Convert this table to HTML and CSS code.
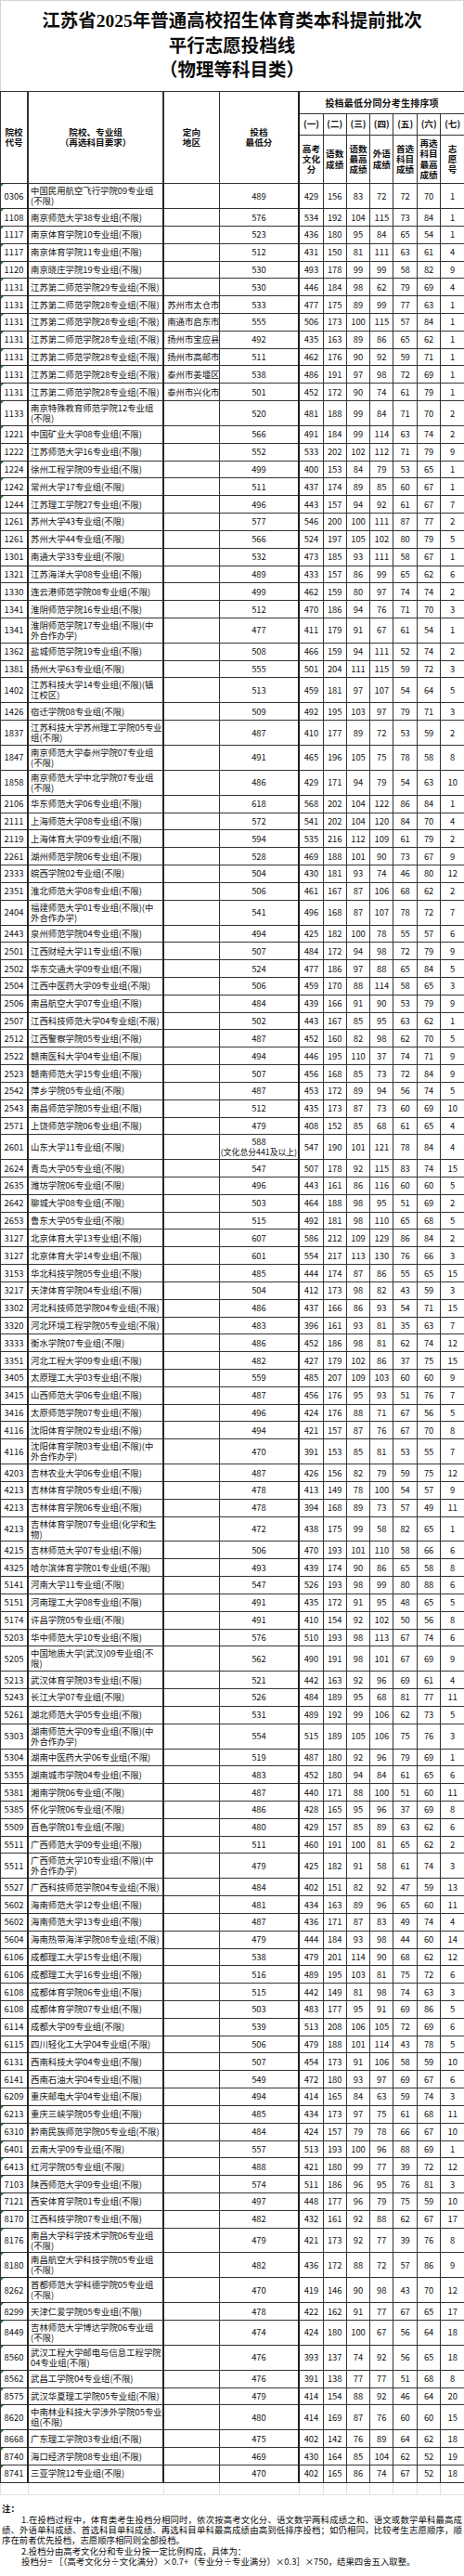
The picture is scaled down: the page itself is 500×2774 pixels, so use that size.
FILE: index.html
```html
<!DOCTYPE html>
<html lang="zh-CN">
<head>
<meta charset="utf-8">
<title>江苏省2025年普通高校招生体育类本科提前批次平行志愿投档线（物理等科目类）</title>
<link rel="stylesheet" href="styles.css">
</head>
<body>
<div class="sheet">
  <div class="title">
    <div>江苏省2025年普通高校招生体育类本科提前批次</div>
    <div>平行志愿投档线</div>
    <div>（物理等科目类）</div>
  </div>
  <table class="grid">
    <colgroup>
      <col class="w1"><col class="w2"><col class="w3"><col class="w4">
      <col class="w5"><col class="w6"><col class="w7"><col class="w8"><col class="w9"><col class="w10"><col class="w11">
    </colgroup>
    <thead>
      <tr class="ha">
        <th rowspan="3" class="bl">院校<br>代号</th>
        <th rowspan="3" class="bl2">院校、专业组<br>（再选科目要求）</th>
        <th rowspan="3">定向<br>地区</th>
        <th rowspan="3">投档<br>最低分</th>
        <th colspan="7" class="tk">投档最低分同分考生排序项</th>
      </tr>
      <tr class="hb">
        <th class="tk">(一)</th><th>(二)</th><th>(三)</th><th>(四)</th><th>(五)</th><th>(六)</th><th>(七)</th>
      </tr>
      <tr class="hc">
        <th class="tk">高考<br>文化<br>分</th><th>语数<br>成绩</th><th>语数<br>最高<br>成绩</th><th>外语<br>成绩</th><th>首选<br>科目<br>成绩</th><th>再选<br>科目<br>最高<br>成绩</th><th>志<br>愿<br>号</th>
      </tr>
    </thead>
    <tbody class="data">
      <tr class="t"><td class="g">0306</td><td>中国民用航空飞行学院09专业组<br>(不限)</td><td></td><td>489</td><td>429</td><td>156</td><td>83</td><td>72</td><td>72</td><td>70</td><td>1</td></tr>
      <tr><td class="g">1108</td><td>南京师范大学38专业组(不限)</td><td></td><td>576</td><td>534</td><td>192</td><td>104</td><td>115</td><td>73</td><td>84</td><td>1</td></tr>
      <tr><td class="g">1117</td><td>南京体育学院10专业组(不限)</td><td></td><td>523</td><td>436</td><td>180</td><td>95</td><td>84</td><td>65</td><td>54</td><td>1</td></tr>
      <tr><td class="g">1117</td><td>南京体育学院11专业组(不限)</td><td></td><td>512</td><td>431</td><td>150</td><td>81</td><td>111</td><td>63</td><td>61</td><td>4</td></tr>
      <tr><td class="g">1120</td><td>南京晓庄学院19专业组(不限)</td><td></td><td>530</td><td>493</td><td>178</td><td>99</td><td>99</td><td>58</td><td>82</td><td>9</td></tr>
      <tr><td class="g">1131</td><td>江苏第二师范学院29专业组(不限)</td><td></td><td>530</td><td>446</td><td>184</td><td>98</td><td>62</td><td>79</td><td>69</td><td>4</td></tr>
      <tr><td class="g">1131</td><td>江苏第二师范学院28专业组(不限)</td><td>苏州市太仓市</td><td>533</td><td>477</td><td>175</td><td>89</td><td>99</td><td>77</td><td>63</td><td>1</td></tr>
      <tr><td class="g">1131</td><td>江苏第二师范学院28专业组(不限)</td><td>南通市启东市</td><td>555</td><td>506</td><td>173</td><td>100</td><td>115</td><td>57</td><td>84</td><td>1</td></tr>
      <tr><td class="g">1131</td><td>江苏第二师范学院28专业组(不限)</td><td>扬州市宝应县</td><td>492</td><td>435</td><td>163</td><td>89</td><td>86</td><td>65</td><td>62</td><td>1</td></tr>
      <tr><td class="g">1131</td><td>江苏第二师范学院28专业组(不限)</td><td>扬州市高邮市</td><td>511</td><td>462</td><td>176</td><td>90</td><td>92</td><td>59</td><td>71</td><td>1</td></tr>
      <tr><td class="g">1131</td><td>江苏第二师范学院28专业组(不限)</td><td>泰州市姜堰区</td><td>538</td><td>486</td><td>191</td><td>97</td><td>98</td><td>72</td><td>69</td><td>1</td></tr>
      <tr><td class="g">1131</td><td>江苏第二师范学院28专业组(不限)</td><td>泰州市兴化市</td><td>501</td><td>452</td><td>172</td><td>90</td><td>74</td><td>61</td><td>79</td><td>1</td></tr>
      <tr class="t"><td class="g">1133</td><td>南京特殊教育师范学院12专业组<br>(不限)</td><td></td><td>520</td><td>481</td><td>188</td><td>99</td><td>84</td><td>71</td><td>70</td><td>2</td></tr>
      <tr><td class="g">1221</td><td>中国矿业大学08专业组(不限)</td><td></td><td>566</td><td>491</td><td>184</td><td>99</td><td>114</td><td>63</td><td>74</td><td>2</td></tr>
      <tr><td>1222</td><td>江苏师范大学16专业组(不限)</td><td></td><td>552</td><td>533</td><td>202</td><td>102</td><td>112</td><td>71</td><td>79</td><td>9</td></tr>
      <tr><td class="g">1224</td><td>徐州工程学院09专业组(不限)</td><td></td><td>499</td><td>400</td><td>153</td><td>84</td><td>79</td><td>53</td><td>65</td><td>1</td></tr>
      <tr><td class="g">1242</td><td>常州大学17专业组(不限)</td><td></td><td>511</td><td>437</td><td>174</td><td>89</td><td>85</td><td>60</td><td>67</td><td>1</td></tr>
      <tr><td class="g">1244</td><td>江苏理工学院27专业组(不限)</td><td></td><td>496</td><td>443</td><td>157</td><td>94</td><td>92</td><td>61</td><td>67</td><td>7</td></tr>
      <tr><td>1261</td><td>苏州大学43专业组(不限)</td><td></td><td>577</td><td>546</td><td>200</td><td>100</td><td>111</td><td>87</td><td>77</td><td>2</td></tr>
      <tr><td>1261</td><td>苏州大学44专业组(不限)</td><td></td><td>566</td><td>524</td><td>197</td><td>105</td><td>102</td><td>80</td><td>79</td><td>5</td></tr>
      <tr><td>1301</td><td>南通大学33专业组(不限)</td><td></td><td>532</td><td>473</td><td>185</td><td>93</td><td>111</td><td>58</td><td>67</td><td>1</td></tr>
      <tr><td>1321</td><td>江苏海洋大学08专业组(不限)</td><td></td><td>489</td><td>433</td><td>157</td><td>86</td><td>99</td><td>65</td><td>62</td><td>6</td></tr>
      <tr><td>1330</td><td>连云港师范学院08专业组(不限)</td><td></td><td>499</td><td>462</td><td>159</td><td>80</td><td>97</td><td>74</td><td>74</td><td>2</td></tr>
      <tr><td>1341</td><td>淮阴师范学院16专业组(不限)</td><td></td><td>512</td><td>470</td><td>186</td><td>94</td><td>76</td><td>71</td><td>70</td><td>3</td></tr>
      <tr class="t"><td>1341</td><td>淮阴师范学院17专业组(不限)(中<br>外合作办学)</td><td></td><td>477</td><td>411</td><td>179</td><td>91</td><td>67</td><td>61</td><td>54</td><td>1</td></tr>
      <tr><td>1362</td><td>盐城师范学院19专业组(不限)</td><td></td><td>508</td><td>466</td><td>159</td><td>94</td><td>111</td><td>52</td><td>74</td><td>2</td></tr>
      <tr><td>1381</td><td>扬州大学63专业组(不限)</td><td></td><td>555</td><td>501</td><td>204</td><td>111</td><td>115</td><td>59</td><td>72</td><td>3</td></tr>
      <tr class="t"><td>1402</td><td>江苏科技大学14专业组(不限)(镇<br>江校区)</td><td></td><td>513</td><td>459</td><td>181</td><td>97</td><td>107</td><td>54</td><td>64</td><td>5</td></tr>
      <tr><td>1426</td><td>宿迁学院08专业组(不限)</td><td></td><td>509</td><td>492</td><td>195</td><td>103</td><td>97</td><td>79</td><td>71</td><td>3</td></tr>
      <tr class="t"><td>1837</td><td>江苏科技大学苏州理工学院05专业<br>组(不限)</td><td></td><td>487</td><td>410</td><td>177</td><td>89</td><td>72</td><td>53</td><td>59</td><td>2</td></tr>
      <tr class="t"><td>1847</td><td>南京师范大学泰州学院07专业组<br>(不限)</td><td></td><td>491</td><td>465</td><td>196</td><td>105</td><td>75</td><td>78</td><td>58</td><td>8</td></tr>
      <tr class="t"><td>1858</td><td>南京师范大学中北学院07专业组<br>(不限)</td><td></td><td>486</td><td>429</td><td>171</td><td>94</td><td>79</td><td>54</td><td>63</td><td>10</td></tr>
      <tr><td>2106</td><td>华东师范大学06专业组(不限)</td><td></td><td>618</td><td>568</td><td>202</td><td>104</td><td>122</td><td>86</td><td>84</td><td>1</td></tr>
      <tr><td>2111</td><td>上海师范大学08专业组(不限)</td><td></td><td>572</td><td>541</td><td>202</td><td>104</td><td>120</td><td>84</td><td>70</td><td>4</td></tr>
      <tr><td>2119</td><td>上海体育大学09专业组(不限)</td><td></td><td>594</td><td>535</td><td>216</td><td>112</td><td>109</td><td>61</td><td>79</td><td>2</td></tr>
      <tr><td>2261</td><td>湖州师范学院06专业组(不限)</td><td></td><td>528</td><td>469</td><td>188</td><td>101</td><td>90</td><td>73</td><td>67</td><td>9</td></tr>
      <tr><td>2333</td><td>皖西学院02专业组(不限)</td><td></td><td>504</td><td>430</td><td>181</td><td>93</td><td>74</td><td>46</td><td>80</td><td>12</td></tr>
      <tr><td>2351</td><td>淮北师范大学08专业组(不限)</td><td></td><td>506</td><td>461</td><td>167</td><td>87</td><td>106</td><td>68</td><td>62</td><td>2</td></tr>
      <tr class="t"><td>2404</td><td>福建师范大学01专业组(不限)(中<br>外合作办学)</td><td></td><td>541</td><td>496</td><td>168</td><td>87</td><td>107</td><td>78</td><td>72</td><td>7</td></tr>
      <tr><td>2443</td><td>泉州师范学院04专业组(不限)</td><td></td><td>494</td><td>425</td><td>182</td><td>100</td><td>78</td><td>55</td><td>57</td><td>6</td></tr>
      <tr><td>2501</td><td>江西财经大学11专业组(不限)</td><td></td><td>507</td><td>484</td><td>172</td><td>94</td><td>98</td><td>72</td><td>79</td><td>9</td></tr>
      <tr><td>2502</td><td>华东交通大学09专业组(不限)</td><td></td><td>524</td><td>477</td><td>186</td><td>97</td><td>88</td><td>65</td><td>84</td><td>5</td></tr>
      <tr><td>2504</td><td>江西中医药大学09专业组(不限)</td><td></td><td>506</td><td>459</td><td>170</td><td>88</td><td>114</td><td>58</td><td>65</td><td>3</td></tr>
      <tr><td>2506</td><td>南昌航空大学07专业组(不限)</td><td></td><td>484</td><td>439</td><td>166</td><td>91</td><td>90</td><td>53</td><td>79</td><td>9</td></tr>
      <tr><td>2507</td><td>江西科技师范大学04专业组(不限)</td><td></td><td>502</td><td>443</td><td>167</td><td>85</td><td>95</td><td>63</td><td>62</td><td>1</td></tr>
      <tr><td>2512</td><td>江西警察学院05专业组(不限)</td><td></td><td>487</td><td>452</td><td>160</td><td>82</td><td>98</td><td>62</td><td>70</td><td>5</td></tr>
      <tr><td>2522</td><td>赣南医科大学04专业组(不限)</td><td></td><td>494</td><td>446</td><td>195</td><td>110</td><td>37</td><td>74</td><td>71</td><td>9</td></tr>
      <tr><td>2523</td><td>赣南师范大学15专业组(不限)</td><td></td><td>507</td><td>456</td><td>168</td><td>85</td><td>73</td><td>72</td><td>84</td><td>9</td></tr>
      <tr><td>2542</td><td>萍乡学院05专业组(不限)</td><td></td><td>487</td><td>453</td><td>172</td><td>89</td><td>94</td><td>56</td><td>74</td><td>5</td></tr>
      <tr><td>2543</td><td>南昌师范学院05专业组(不限)</td><td></td><td>512</td><td>435</td><td>173</td><td>87</td><td>73</td><td>60</td><td>69</td><td>10</td></tr>
      <tr><td>2571</td><td>上饶师范学院06专业组(不限)</td><td></td><td>479</td><td>408</td><td>152</td><td>85</td><td>68</td><td>61</td><td>65</td><td>4</td></tr>
      <tr class="t"><td>2601</td><td>山东大学11专业组(不限)</td><td></td><td>588<br><span class="sm">(文化总分441及以上)</span></td><td>547</td><td>190</td><td>101</td><td>121</td><td>78</td><td>84</td><td>4</td></tr>
      <tr><td>2624</td><td>青岛大学05专业组(不限)</td><td></td><td>547</td><td>507</td><td>178</td><td>92</td><td>115</td><td>83</td><td>74</td><td>15</td></tr>
      <tr><td>2635</td><td>潍坊学院06专业组(不限)</td><td></td><td>496</td><td>443</td><td>161</td><td>86</td><td>116</td><td>60</td><td>60</td><td>5</td></tr>
      <tr><td>2642</td><td>聊城大学08专业组(不限)</td><td></td><td>503</td><td>464</td><td>188</td><td>98</td><td>95</td><td>51</td><td>69</td><td>2</td></tr>
      <tr><td>2653</td><td>鲁东大学05专业组(不限)</td><td></td><td>515</td><td>492</td><td>181</td><td>98</td><td>110</td><td>65</td><td>68</td><td>5</td></tr>
      <tr><td>3127</td><td>北京体育大学13专业组(不限)</td><td></td><td>607</td><td>586</td><td>212</td><td>109</td><td>129</td><td>86</td><td>84</td><td>2</td></tr>
      <tr><td>3127</td><td>北京体育大学14专业组(不限)</td><td></td><td>601</td><td>554</td><td>217</td><td>113</td><td>130</td><td>76</td><td>66</td><td>3</td></tr>
      <tr><td>3153</td><td>华北科技学院05专业组(不限)</td><td></td><td>485</td><td>444</td><td>174</td><td>87</td><td>86</td><td>55</td><td>65</td><td>15</td></tr>
      <tr><td>3217</td><td>天津体育学院04专业组(不限)</td><td></td><td>504</td><td>412</td><td>173</td><td>98</td><td>82</td><td>43</td><td>59</td><td>3</td></tr>
      <tr><td>3302</td><td>河北科技师范学院04专业组(不限)</td><td></td><td>486</td><td>437</td><td>166</td><td>86</td><td>93</td><td>54</td><td>71</td><td>15</td></tr>
      <tr><td>3320</td><td>河北环境工程学院05专业组(不限)</td><td></td><td>483</td><td>396</td><td>161</td><td>93</td><td>81</td><td>35</td><td>63</td><td>7</td></tr>
      <tr><td>3333</td><td>衡水学院07专业组(不限)</td><td></td><td>486</td><td>452</td><td>186</td><td>98</td><td>81</td><td>62</td><td>74</td><td>12</td></tr>
      <tr><td>3351</td><td>河北工程大学09专业组(不限)</td><td></td><td>482</td><td>427</td><td>179</td><td>102</td><td>86</td><td>37</td><td>75</td><td>15</td></tr>
      <tr><td>3405</td><td>太原理工大学03专业组(不限)</td><td></td><td>559</td><td>485</td><td>207</td><td>109</td><td>103</td><td>60</td><td>60</td><td>9</td></tr>
      <tr><td>3415</td><td>山西师范大学06专业组(不限)</td><td></td><td>487</td><td>456</td><td>176</td><td>95</td><td>93</td><td>51</td><td>76</td><td>7</td></tr>
      <tr><td>3416</td><td>太原师范学院07专业组(不限)</td><td></td><td>496</td><td>424</td><td>176</td><td>88</td><td>71</td><td>67</td><td>56</td><td>5</td></tr>
      <tr><td>4116</td><td>沈阳体育学院02专业组(不限)</td><td></td><td>494</td><td>421</td><td>157</td><td>87</td><td>76</td><td>67</td><td>70</td><td>8</td></tr>
      <tr class="t"><td>4116</td><td>沈阳体育学院03专业组(不限)(中<br>外合作办学)</td><td></td><td>470</td><td>391</td><td>153</td><td>85</td><td>81</td><td>53</td><td>55</td><td>7</td></tr>
      <tr><td>4203</td><td>吉林农业大学06专业组(不限)</td><td></td><td>487</td><td>426</td><td>156</td><td>82</td><td>79</td><td>59</td><td>75</td><td>12</td></tr>
      <tr><td>4213</td><td>吉林体育学院05专业组(不限)</td><td></td><td>478</td><td>413</td><td>149</td><td>78</td><td>100</td><td>54</td><td>57</td><td>9</td></tr>
      <tr><td>4213</td><td>吉林体育学院06专业组(不限)</td><td></td><td>478</td><td>394</td><td>168</td><td>89</td><td>73</td><td>57</td><td>49</td><td>11</td></tr>
      <tr class="t"><td>4213</td><td>吉林体育学院07专业组(化学和生<br>物)</td><td></td><td>472</td><td>438</td><td>175</td><td>99</td><td>58</td><td>82</td><td>65</td><td>1</td></tr>
      <tr><td>4215</td><td>吉林师范大学07专业组(不限)</td><td></td><td>506</td><td>470</td><td>193</td><td>101</td><td>110</td><td>58</td><td>66</td><td>6</td></tr>
      <tr><td>4325</td><td>哈尔滨体育学院01专业组(不限)</td><td></td><td>493</td><td>439</td><td>174</td><td>90</td><td>86</td><td>65</td><td>58</td><td>8</td></tr>
      <tr><td>5141</td><td>河南大学11专业组(不限)</td><td></td><td>547</td><td>526</td><td>193</td><td>98</td><td>99</td><td>80</td><td>88</td><td>6</td></tr>
      <tr><td>5151</td><td>河南理工大学08专业组(不限)</td><td></td><td>491</td><td>435</td><td>172</td><td>91</td><td>95</td><td>48</td><td>65</td><td>5</td></tr>
      <tr><td>5174</td><td>许昌学院05专业组(不限)</td><td></td><td>491</td><td>410</td><td>154</td><td>92</td><td>102</td><td>50</td><td>56</td><td>8</td></tr>
      <tr><td>5203</td><td>华中师范大学10专业组(不限)</td><td></td><td>576</td><td>510</td><td>193</td><td>98</td><td>113</td><td>67</td><td>74</td><td>6</td></tr>
      <tr class="t"><td>5205</td><td>中国地质大学(武汉)09专业组(不<br>限)</td><td></td><td>562</td><td>490</td><td>191</td><td>98</td><td>101</td><td>67</td><td>69</td><td>9</td></tr>
      <tr><td>5213</td><td>武汉体育学院03专业组(不限)</td><td></td><td>521</td><td>442</td><td>163</td><td>92</td><td>96</td><td>69</td><td>61</td><td>4</td></tr>
      <tr><td>5243</td><td>长江大学07专业组(不限)</td><td></td><td>526</td><td>484</td><td>189</td><td>95</td><td>68</td><td>81</td><td>77</td><td>11</td></tr>
      <tr><td>5261</td><td>湖北师范大学05专业组(不限)</td><td></td><td>531</td><td>489</td><td>192</td><td>99</td><td>106</td><td>62</td><td>73</td><td>5</td></tr>
      <tr class="t"><td>5303</td><td>湖南师范大学09专业组(不限)(中<br>外合作办学)</td><td></td><td>554</td><td>515</td><td>189</td><td>105</td><td>106</td><td>75</td><td>76</td><td>3</td></tr>
      <tr><td>5304</td><td>湖南中医药大学06专业组(不限)</td><td></td><td>519</td><td>487</td><td>180</td><td>92</td><td>96</td><td>79</td><td>69</td><td>1</td></tr>
      <tr><td>5355</td><td>湖南城市学院04专业组(不限)</td><td></td><td>483</td><td>452</td><td>180</td><td>94</td><td>84</td><td>61</td><td>65</td><td>6</td></tr>
      <tr><td>5381</td><td>湘南学院06专业组(不限)</td><td></td><td>487</td><td>440</td><td>171</td><td>88</td><td>100</td><td>51</td><td>60</td><td>11</td></tr>
      <tr><td>5385</td><td>怀化学院06专业组(不限)</td><td></td><td>486</td><td>428</td><td>165</td><td>95</td><td>96</td><td>37</td><td>69</td><td>8</td></tr>
      <tr><td>5509</td><td>百色学院01专业组(不限)</td><td></td><td>480</td><td>429</td><td>157</td><td>85</td><td>89</td><td>63</td><td>62</td><td>6</td></tr>
      <tr><td>5511</td><td>广西师范大学09专业组(不限)</td><td></td><td>511</td><td>460</td><td>191</td><td>100</td><td>81</td><td>65</td><td>62</td><td>2</td></tr>
      <tr class="t"><td>5511</td><td>广西师范大学10专业组(不限)(中<br>外合作办学)</td><td></td><td>479</td><td>425</td><td>182</td><td>91</td><td>58</td><td>61</td><td>74</td><td>3</td></tr>
      <tr><td>5527</td><td>广西科技师范学院04专业组(不限)</td><td></td><td>484</td><td>402</td><td>151</td><td>82</td><td>92</td><td>47</td><td>59</td><td>13</td></tr>
      <tr><td>5602</td><td>海南师范大学12专业组(不限)</td><td></td><td>481</td><td>434</td><td>163</td><td>89</td><td>96</td><td>65</td><td>60</td><td>11</td></tr>
      <tr><td>5602</td><td>海南师范大学13专业组(不限)</td><td></td><td>487</td><td>436</td><td>171</td><td>87</td><td>83</td><td>49</td><td>74</td><td>4</td></tr>
      <tr><td>5604</td><td>海南热带海洋学院08专业组(不限)</td><td></td><td>479</td><td>444</td><td>184</td><td>93</td><td>98</td><td>44</td><td>60</td><td>14</td></tr>
      <tr><td>6106</td><td>成都理工大学15专业组(不限)</td><td></td><td>538</td><td>479</td><td>201</td><td>114</td><td>90</td><td>68</td><td>62</td><td>12</td></tr>
      <tr><td>6106</td><td>成都理工大学16专业组(不限)</td><td></td><td>516</td><td>489</td><td>195</td><td>103</td><td>81</td><td>75</td><td>72</td><td>6</td></tr>
      <tr><td>6108</td><td>成都体育学院06专业组(不限)</td><td></td><td>515</td><td>442</td><td>149</td><td>81</td><td>98</td><td>74</td><td>63</td><td>3</td></tr>
      <tr><td>6108</td><td>成都体育学院07专业组(不限)</td><td></td><td>503</td><td>483</td><td>177</td><td>95</td><td>91</td><td>69</td><td>86</td><td>5</td></tr>
      <tr><td>6114</td><td>成都大学09专业组(不限)</td><td></td><td>539</td><td>513</td><td>208</td><td>106</td><td>105</td><td>72</td><td>69</td><td>6</td></tr>
      <tr><td>6115</td><td>四川轻化工大学04专业组(不限)</td><td></td><td>506</td><td>479</td><td>188</td><td>101</td><td>114</td><td>43</td><td>78</td><td>5</td></tr>
      <tr><td>6131</td><td>西南科技大学04专业组(不限)</td><td></td><td>507</td><td>454</td><td>173</td><td>91</td><td>106</td><td>58</td><td>59</td><td>10</td></tr>
      <tr><td>6141</td><td>西南石油大学04专业组(不限)</td><td></td><td>549</td><td>472</td><td>180</td><td>93</td><td>97</td><td>69</td><td>67</td><td>6</td></tr>
      <tr><td>6209</td><td>重庆邮电大学04专业组(不限)</td><td></td><td>494</td><td>414</td><td>165</td><td>84</td><td>63</td><td>59</td><td>74</td><td>3</td></tr>
      <tr><td class="g">6213</td><td>重庆三峡学院05专业组(不限)</td><td></td><td>485</td><td>434</td><td>173</td><td>97</td><td>75</td><td>61</td><td>68</td><td>11</td></tr>
      <tr><td class="g">6310</td><td>黔南民族师范学院05专业组(不限)</td><td></td><td>484</td><td>424</td><td>157</td><td>79</td><td>78</td><td>66</td><td>67</td><td>10</td></tr>
      <tr><td class="g">6401</td><td>云南大学09专业组(不限)</td><td></td><td>557</td><td>513</td><td>193</td><td>100</td><td>96</td><td>88</td><td>69</td><td>1</td></tr>
      <tr><td class="g">6413</td><td>红河学院05专业组(不限)</td><td></td><td>488</td><td>421</td><td>180</td><td>99</td><td>77</td><td>39</td><td>72</td><td>12</td></tr>
      <tr><td class="g">7103</td><td>陕西师范大学09专业组(不限)</td><td></td><td>574</td><td>511</td><td>186</td><td>96</td><td>95</td><td>76</td><td>81</td><td>3</td></tr>
      <tr><td class="g">7121</td><td>西安体育学院01专业组(不限)</td><td></td><td>497</td><td>448</td><td>177</td><td>96</td><td>79</td><td>75</td><td>59</td><td>10</td></tr>
      <tr><td class="g">8170</td><td>江西科技学院07专业组(不限)</td><td></td><td>482</td><td>432</td><td>161</td><td>92</td><td>88</td><td>62</td><td>67</td><td>17</td></tr>
      <tr class="t"><td class="g">8176</td><td>南昌大学科学技术学院06专业组<br>(不限)</td><td></td><td>479</td><td>421</td><td>173</td><td>92</td><td>77</td><td>39</td><td>76</td><td>8</td></tr>
      <tr class="t"><td class="g">8180</td><td>南昌航空大学科技学院05专业组<br>(不限)</td><td></td><td>482</td><td>436</td><td>172</td><td>88</td><td>72</td><td>57</td><td>86</td><td>9</td></tr>
      <tr class="t"><td class="g">8262</td><td>首都师范大学科德学院05专业组<br>(不限)</td><td></td><td>470</td><td>419</td><td>146</td><td>90</td><td>98</td><td>43</td><td>70</td><td>12</td></tr>
      <tr><td class="g">8299</td><td>天津仁爱学院05专业组(不限)</td><td></td><td>478</td><td>422</td><td>162</td><td>91</td><td>77</td><td>67</td><td>65</td><td>17</td></tr>
      <tr class="t"><td class="g">8449</td><td>吉林师范大学博达学院06专业组<br>(不限)</td><td></td><td>474</td><td>424</td><td>180</td><td>100</td><td>67</td><td>56</td><td>64</td><td>18</td></tr>
      <tr class="t"><td class="g">8560</td><td>武汉工程大学邮电与信息工程学院<br>04专业组(不限)</td><td></td><td>476</td><td>393</td><td>137</td><td>74</td><td>92</td><td>56</td><td>65</td><td>18</td></tr>
      <tr><td class="g">8562</td><td>武昌工学院04专业组(不限)</td><td></td><td>476</td><td>391</td><td>138</td><td>77</td><td>77</td><td>51</td><td>68</td><td>8</td></tr>
      <tr><td class="g">8575</td><td>武汉华夏理工学院05专业组(不限)</td><td></td><td>479</td><td>414</td><td>154</td><td>88</td><td>92</td><td>46</td><td>64</td><td>20</td></tr>
      <tr class="t"><td class="g">8620</td><td>中南林业科技大学涉外学院05专业<br>组(不限)</td><td></td><td>480</td><td>414</td><td>169</td><td>87</td><td>76</td><td>60</td><td>60</td><td>15</td></tr>
      <tr><td class="g">8668</td><td>广东理工学院03专业组(不限)</td><td></td><td>475</td><td>402</td><td>142</td><td>76</td><td>89</td><td>64</td><td>62</td><td>18</td></tr>
      <tr><td class="g">8740</td><td>海口经济学院08专业组(不限)</td><td></td><td>469</td><td>430</td><td>164</td><td>85</td><td>104</td><td>62</td><td>52</td><td>19</td></tr>
      <tr><td class="g">8741</td><td>三亚学院12专业组(不限)</td><td></td><td>470</td><td>402</td><td>165</td><td>86</td><td>74</td><td>67</td><td>52</td><td>18</td></tr>
    </tbody>
    <tbody class="blank">
      <tr><td></td><td></td><td></td><td></td><td></td><td></td><td></td><td></td><td></td><td></td><td></td></tr>
    </tbody>
  </table>
  <div class="notes">
    <div class="nh">注：</div>
    <div class="ln ind just">1.在投档过程中，体育类考生投档分相同时，依次按高考文化分、语文数学两科成绩之和、语文或数学单科最高成</div>
    <div class="ln just">绩、外语单科成绩、首选科目单科成绩、再选科目单科最高成绩由高到低排序投档；如仍相同，比较考生志愿顺序，顺</div>
    <div class="ln">序在前者优先投档，志愿顺序相同则全部投档。</div>
    <div class="ln ind">2.投档分由高考文化分和专业分按一定比例构成，具体为：</div>
    <div class="ln ind">投档分= ［（高考文化分÷文化满分）×0.7+（专业分÷专业满分）×0.3］×750，结果四舍五入取整。</div>
  </div>
</div>
</body>
</html>
```

FILE: styles.css
```css
* {
  box-sizing: border-box;
}

body {
  margin: 0;
  background: #ffffff;
  font-family: "Noto Sans CJK SC", sans-serif;
  color: #141414;
}

.sheet {
  width: 500px;
}

.title {
  height: 98px;
  border: 1px solid #d4d4d4;
  border-bottom: 0;
  padding-top: 9px;
  text-align: center;
  font-family: "Liberation Serif", "Noto Sans CJK SC", serif;
  font-weight: 700;
  font-size: 19.5px;
  line-height: 26.5px;
  color: #0c0c0c;
}

.grid {
  width: 500px;
  table-layout: fixed;
  border-collapse: collapse;
  font-size: 9.4px;
}

.w1 { width: 29.5px; }
.w2 { width: 146.2px; }
.w3 { width: 60px; }
.w4 { width: 86px; }
.w5 { width: 26px; }
.w6 { width: 25px; }
.w7 { width: 25.6px; }
.w8 { width: 25px; }
.w9 { width: 25.7px; }
.w10 { width: 25.3px; }
.w11 { width: 25.7px; }

.grid th,
.grid td {
  border: 1px solid #333333;
  padding: 0;
  text-align: center;
  vertical-align: middle;
  white-space: nowrap;
  overflow: hidden;
}

.grid thead th {
  font-weight: 700;
  font-size: 9.6px;
  line-height: 11.2px;
  color: #111111;
}

.grid thead th.bl,
.grid thead th.bl2 {
  border-right-width: 2px;
}

.grid thead th.tk {
  border-left: 2px solid #1e1e1e;
}

.grid tr.ha { height: 23.7px; }
.grid tr.hb { height: 23.3px; }
.grid tr.hc { height: 52.3px; }

.grid tr.ha th[colspan] {
  font-size: 10px;
  letter-spacing: 0.2px;
}

.data tr { height: 18.82px; }
.data tr.t { height: 26.9px; }

.data td {
  line-height: 11px;
}

.data td:nth-child(1) {
  position: relative;
  border-right: 2px solid #262626;
}

.data td:nth-child(2) {
  text-align: left;
  padding-left: 2px;
  border-right: 2px solid #262626;
}

.data td:nth-child(3) {
  text-align: left;
  padding-left: 3px;
}

.data td:nth-child(5) {
  border-left: 2px solid #1e1e1e;
}

.data td.g::before {
  content: "";
  position: absolute;
  left: 0;
  top: 0;
  border-top: 3px solid #2e7d32;
  border-right: 3px solid transparent;
}

.sm {
  font-size: 8.8px;
}

.blank tr { height: 13.4px; }

.blank td {
  border: 1px solid #e2e2e2;
  border-top: 0;
}

.notes {
  padding-top: 9px;
  font-size: 9.4px;
  line-height: 11.4px;
  color: #0e0e0e;
}

.notes .nh {
  font-weight: 700;
  padding-left: 2px;
}

.notes .ln {
  padding-left: 2px;
  padding-right: 2px;
  white-space: normal;
}

.notes .ind {
  padding-left: 23px;
}

.notes .just {
  text-align: justify;
  text-align-last: justify;
}
```
